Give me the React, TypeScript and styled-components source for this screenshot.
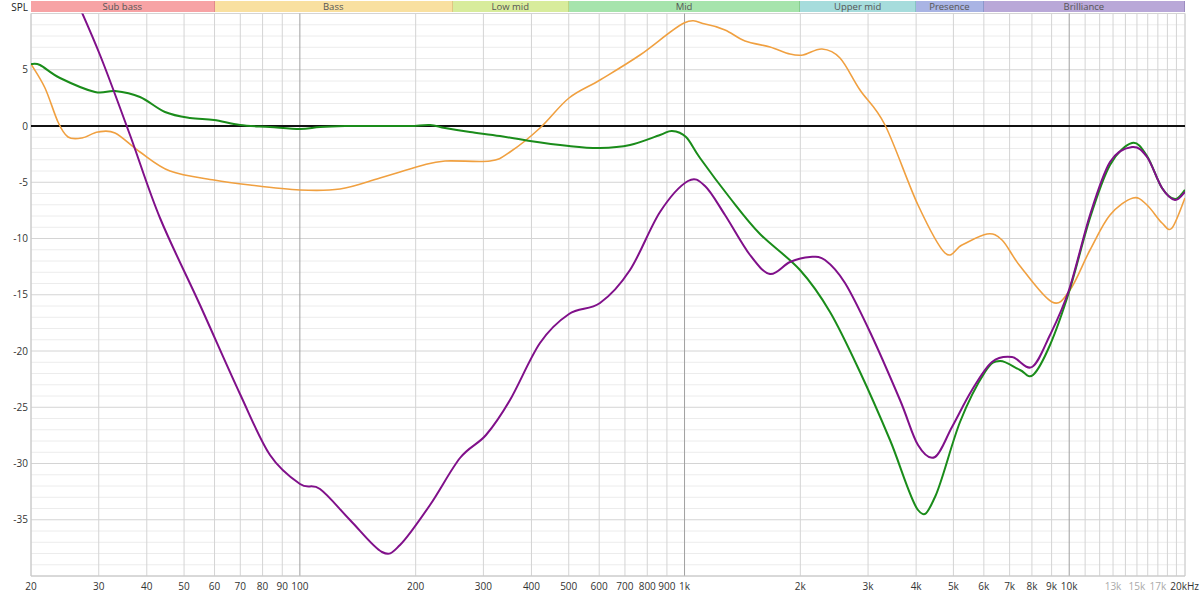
import React from "react";
import styled, { createGlobalStyle } from "styled-components";

const Global = createGlobalStyle`
  html, body { margin: 0; padding: 0; background: #fff; }
  body { font-family: "Open Sans", "Noto Sans", sans-serif; }
`;

const X0 = 31, X1 = 1185, TOP = 13.5, BOT = 576;
const fx = (f: number) => X0 + (Math.log10(f / 20) / 3) * (X1 - X0);
const fy = (db: number) => TOP + (10 - db) * ((BOT - TOP) / 50);

const Page = styled.div`
  position: relative;
  width: 1200px;
  height: 594px;
  overflow: hidden;
`;
const Header = styled.div`
  position: absolute;
  left: ${X0}px;
  top: 1px;
  width: ${X1 - X0}px;
  height: 11px;
  display: flex;
`;
const Band = styled.div<{ $c: string; $b: string }>`
  height: 100%;
  background: ${(p) => p.$c};
  border-right: 1px solid ${(p) => p.$b};
  box-sizing: border-box;
  font-size: 9.5px;
  line-height: 11px;
  color: #555;
  text-align: center;
  overflow: hidden;
  white-space: nowrap;
`;
const Svg = styled.svg`
  position: absolute;
  left: 0;
  top: 0;
`;

const bands = [
  { n: "Sub bass", a: 20, b: 60, c: "#f7a3a5", d: "#e08a8c" },
  { n: "Bass", a: 60, b: 250, c: "#f9e0a0", d: "#e0c684" },
  { n: "Low mid", a: 250, b: 500, c: "#d8ec9c", d: "#bcd482" },
  { n: "Mid", a: 500, b: 2000, c: "#a6e4ac", d: "#88cc90" },
  { n: "Upper mid", a: 2000, b: 4000, c: "#a6dcdc", d: "#88c4c4" },
  { n: "Presence", a: 4000, b: 6000, c: "#a9b4e4", d: "#8c98cc" },
  { n: "Brilliance", a: 6000, b: 20000, c: "#b9a8d8", d: "#9c8cc0" },
];

const freqs: number[] = [];
for (let d = 10; d <= 10000; d *= 10)
  for (let m = 1; m <= 9; m++) {
    const f = d * m;
    if (f >= 20 && f <= 20000) freqs.push(f);
  }
for (let k = 11; k <= 19; k++) freqs.push(k * 1000);
freqs.push(20000);

const xLabels: [number, string, string][] = [
  [20, "20", "#333"], [30, "30", "#333"], [40, "40", "#333"], [50, "50", "#333"], [60, "60", "#333"],
  [70, "70", "#333"], [80, "80", "#333"], [90, "90", "#333"], [100, "100", "#333"], [200, "200", "#333"],
  [300, "300", "#333"], [400, "400", "#333"], [500, "500", "#333"], [600, "600", "#333"], [700, "700", "#333"],
  [800, "800", "#333"], [900, "900", "#333"], [1000, "1k", "#333"], [2000, "2k", "#333"], [3000, "3k", "#333"],
  [4000, "4k", "#333"], [5000, "5k", "#333"], [6000, "6k", "#333"], [7000, "7k", "#333"], [8000, "8k", "#333"],
  [9000, "9k", "#333"], [10000, "10k", "#333"], [13000, "13k", "#aaa"], [15000, "15k", "#aaa"], [17000, "17k", "#aaa"],
];

const green: [number, number][] = [[31,64],[40,65],[60,78],[95,92],[115,91],[140,97],[165,112],[190,118],[214,120],[240,125],[270,127],[300,129],[320,127],[345,126],[380,126],[410,126],[430,125],[445,128],[470,132],[500,136],[530,141],[569,146],[600,148],[630,145],[660,135],[672,131],[686,137],[700,158],[730,198],[760,234],[800,270],[830,312],[860,372],[890,440],[918,510],[935,497],[960,422],[985,372],[1000,361],[1020,370],[1033,375],[1050,345],[1069,292],[1090,218],[1110,165],[1132,143],[1147,156],[1162,188],[1175,199],[1185,190]];
const orange: [number, number][] = [[31,64],[45,88],[58,122],[68,137],[82,138],[98,132],[115,133],[140,152],[170,171],[214,180],[250,185],[300,190],[340,189],[380,178],[420,166],[445,161],[490,161],[510,152],[540,128],[569,98],[600,80],[640,55],[684,23],[705,24],[725,30],[745,41],[770,47],[790,54],[803,55],[822,49],[840,58],[860,90],[885,125],[918,205],[945,253],[962,245],[987,234],[1002,240],[1020,266],[1052,302],[1070,290],[1090,250],[1110,215],[1133,198],[1147,205],[1162,223],[1172,228],[1185,198]];
const purple: [number, number][] = [[72,-10],[100,55],[130,135],[160,218],[200,305],[240,394],[270,455],[300,484],[320,489],[350,520],[382,552],[400,545],[430,505],[460,458],[486,435],[510,400],[540,343],[569,314],[600,303],[630,270],[660,212],[688,181],[705,186],[725,215],[750,255],[770,274],[790,262],[810,257],[825,260],[845,283],[870,332],[900,400],[918,445],[935,457],[952,427],[972,390],[992,362],[1012,357],[1032,367],[1050,335],[1069,290],[1090,215],[1110,162],[1132,147],[1147,157],[1162,188],[1175,200],[1185,192]];

function path(p: [number, number][]) {
  let d = `M${p[0][0]},${p[0][1]}`;
  for (let i = 0; i < p.length - 1; i++) {
    const p0 = p[i - 1] || p[i], p1 = p[i], p2 = p[i + 1], p3 = p[i + 2] || p2;
    const c1x = p1[0] + (p2[0] - p0[0]) / 6, c1y = p1[1] + (p2[1] - p0[1]) / 6;
    const c2x = p2[0] - (p3[0] - p1[0]) / 6, c2y = p2[1] - (p3[1] - p1[1]) / 6;
    d += ` C${c1x.toFixed(1)},${c1y.toFixed(1)} ${c2x.toFixed(1)},${c2y.toFixed(1)} ${p2[0]},${p2[1]}`;
  }
  return d;
}

export default function App() {
  const dbLines: number[] = [];
  for (let db = 10; db >= -40; db--) dbLines.push(db);
  return (
    <Page>
      <Global />
      <Header>
        {bands.map((b) => (
          <Band key={b.n} $c={b.c} $b={b.d} style={{ width: fx(b.b) - fx(b.a) }}>{b.n}</Band>
        ))}
      </Header>
      <Svg width={1200} height={594} viewBox="0 0 1200 594">
        <defs>
          <clipPath id="plot"><rect x={X0} y={TOP} width={X1 - X0} height={BOT - TOP} /></clipPath>
        </defs>
        <text x={28} y={11} fontSize={10} textAnchor="end" fill="#222" fontFamily="Open Sans">SPL</text>
        {dbLines.map((db) => (
          <line key={db} x1={X0} x2={X1} y1={fy(db)} y2={fy(db)} stroke={db % 5 === 0 ? "#d4d4d4" : "#ececec"} strokeWidth={1} />
        ))}
        {freqs.map((f) => (
          <line key={f} x1={fx(f)} x2={fx(f)} y1={TOP} y2={BOT}
            stroke={[100, 1000, 10000].includes(f) ? "#a0a0a0" : "#d4d4d4"} strokeWidth={1} />
        ))}
        <line x1={X0} x2={X0} y1={TOP} y2={BOT} stroke="#c8c8c8" />
        <line x1={X0} x2={X1} y1={BOT} y2={BOT} stroke="#c8c8c8" />
        {[5, 0, -5, -10, -15, -20, -25, -30, -35].map((db) => (
          <text key={db} x={28} y={fy(db) + 3.5} fontSize={10} textAnchor="end" fill="#333" fontFamily="Open Sans">{db}</text>
        ))}
        {xLabels.map(([f, t, c]) => (
          <text key={f} x={fx(f)} y={590} fontSize={10} textAnchor="middle" fill={c} fontFamily="Open Sans">{t}</text>
        ))}
        <text x={1199} y={590} fontSize={10} textAnchor="end" fill="#333" fontFamily="Open Sans">20kHz</text>
        <line x1={X0} x2={X1} y1={fy(0)} y2={fy(0)} stroke="#111" strokeWidth={2} />
        <g clipPath="url(#plot)" fill="none" strokeWidth={2}>
          <path d={path(orange)} stroke="#f0a040" strokeWidth={1.6} />
          <path d={path(green)} stroke="#1a8c1a" />
          <path d={path(purple)} stroke="#80108a" />
        </g>
      </Svg>
    </Page>
  );
}
